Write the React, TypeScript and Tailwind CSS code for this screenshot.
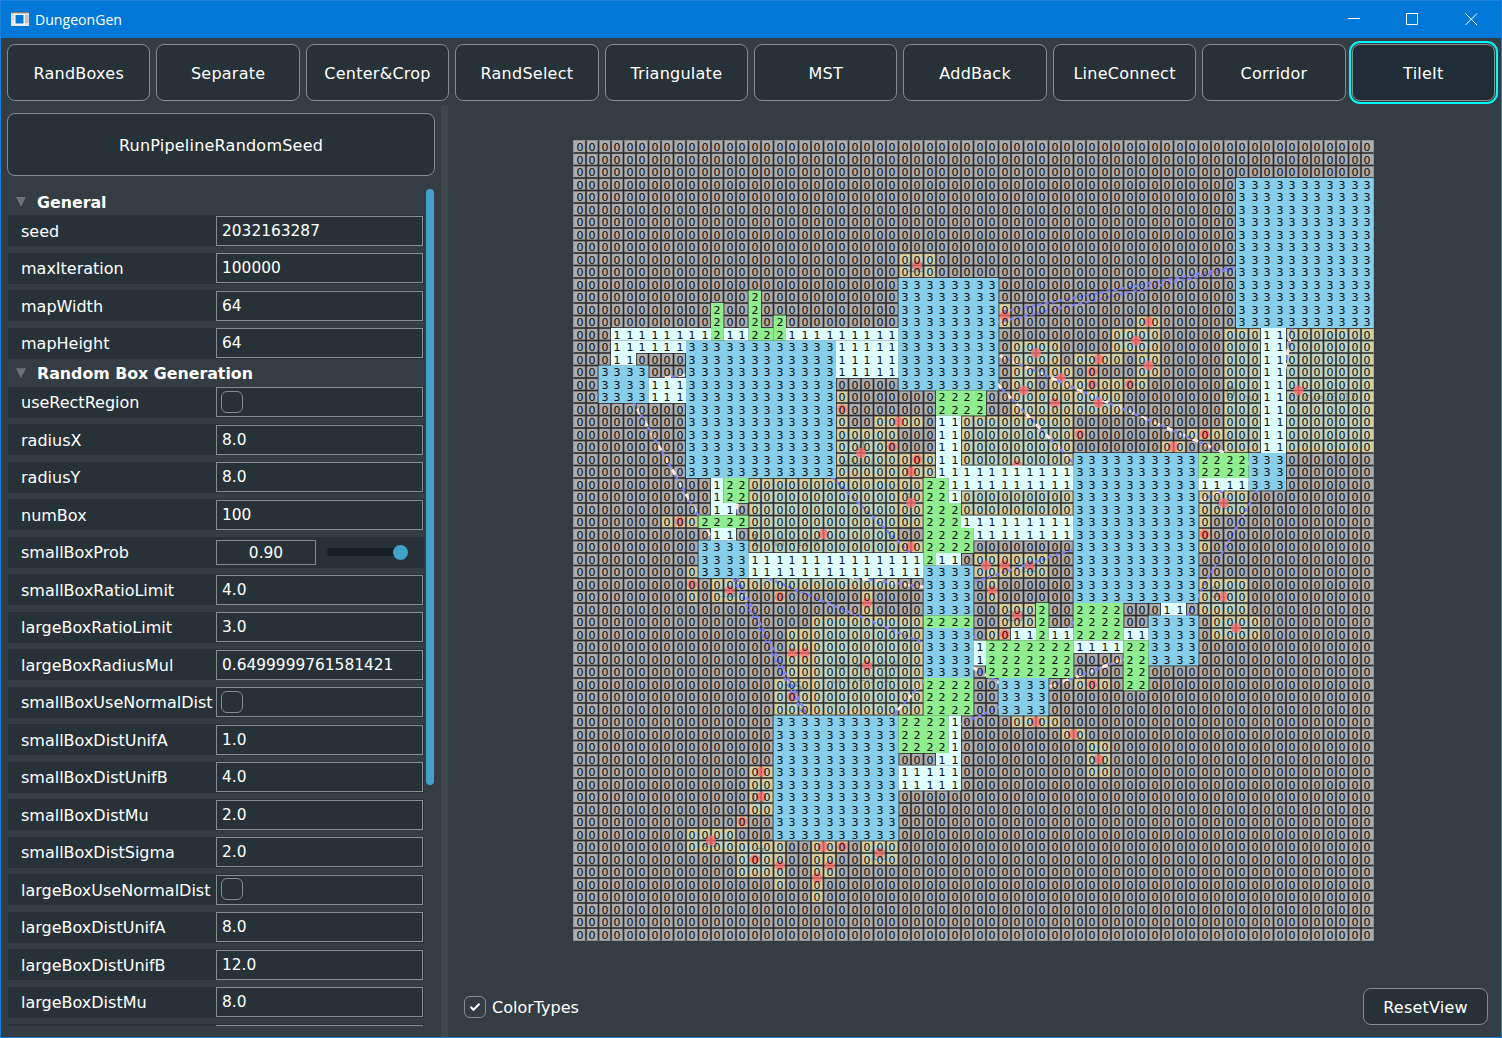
import React from 'react';
import clsx from 'clsx';

const N = 64;
const S = 12.5;

type Rect = [number, number, number, number];
type Tile = [number, number, number, number, number];

// Tile regions as column, row, width, height, type.
const TILES: Tile[] = [
  [53, 3, 11, 12, 3], [26, 11, 8, 9, 3], [9, 16, 12, 11, 3], [2, 18, 4, 3, 3], [40, 25, 10, 12, 3],
  [54, 25, 3, 3, 3], [10, 32, 4, 3, 3], [28, 34, 4, 4, 3], [28, 39, 4, 4, 3], [16, 46, 10, 10, 3],
  [34, 43, 4, 3, 3], [46, 38, 4, 4, 3],
  [14, 12, 1, 4, 2], [11, 13, 1, 3, 2], [16, 14, 1, 2, 2], [15, 15, 1, 1, 2],
  [3, 15, 8, 1, 1], [12, 15, 2, 1, 1], [17, 15, 9, 1, 1], [3, 16, 6, 1, 1], [3, 17, 2, 1, 1],
  [21, 16, 5, 3, 1], [6, 19, 3, 2, 1],
  [29, 20, 4, 2, 2], [29, 22, 2, 5, 1], [31, 26, 9, 1, 1], [28, 27, 2, 2, 2], [30, 27, 10, 1, 1],
  [30, 28, 1, 1, 1], [28, 29, 3, 2, 2], [31, 30, 9, 1, 1], [28, 31, 4, 2, 2], [32, 31, 8, 1, 1],
  [14, 33, 14, 2, 1], [28, 33, 1, 1, 2], [29, 33, 2, 1, 1],
  [11, 27, 1, 2, 1], [12, 27, 2, 2, 2], [11, 29, 2, 1, 1], [10, 30, 4, 1, 2], [11, 31, 2, 1, 1],
  [28, 38, 4, 1, 2], [37, 37, 1, 3, 2], [35, 39, 2, 1, 1], [38, 39, 2, 1, 1], [40, 37, 4, 3, 2],
  [44, 39, 2, 1, 1], [32, 40, 1, 2, 1], [33, 40, 7, 3, 2], [40, 40, 4, 1, 1], [44, 40, 2, 4, 2],
  [47, 37, 2, 1, 1], [50, 25, 4, 2, 2], [50, 27, 4, 1, 1], [55, 15, 2, 10, 1],
  [28, 43, 4, 3, 2], [26, 46, 4, 3, 2], [30, 46, 1, 3, 1], [29, 49, 2, 1, 1], [26, 50, 5, 2, 1],
];

const FILL = ['', '#e0ffff', '#90ee90', '#87ceeb'];

// Generated boxes that were not selected as rooms.
const BOXES: Rect[] = [
  [52, 15, 12, 10], [14, 27, 12, 9], [31, 22, 9, 8], [19, 38, 9, 8], [21, 23, 4, 4], [16, 43, 3, 3],
  [26, 9, 3, 2], [34, 13, 1, 2], [35, 16, 4, 2], [35, 18, 2, 4], [38, 18, 2, 2], [37, 20, 3, 2],
  [40, 17, 4, 1], [41, 18, 1, 1], [40, 19, 3, 1], [43, 19, 3, 1], [40, 20, 4, 2], [45, 14, 2, 1],
  [43, 15, 4, 2], [45, 17, 2, 2], [40, 23, 1, 1], [21, 20, 1, 3], [24, 22, 4, 1], [25, 23, 1, 3],
  [26, 25, 3, 1], [25, 26, 4, 1], [26, 27, 2, 4], [26, 32, 2, 1], [32, 33, 2, 2], [34, 33, 1, 2],
  [35, 33, 3, 2], [33, 35, 1, 2], [34, 37, 3, 2], [33, 39, 3, 1], [23, 36, 1, 2], [17, 39, 1, 4],
  [18, 39, 1, 4], [9, 34, 1, 3], [7, 30, 3, 1], [11, 35, 3, 2], [16, 36, 1, 1], [50, 28, 4, 2],
  [50, 30, 1, 3], [50, 35, 4, 3], [51, 38, 4, 2], [49, 23, 3, 1], [47, 24, 2, 1], [40, 43, 3, 1],
  [39, 47, 2, 1], [41, 48, 2, 3], [35, 46, 4, 1], [14, 50, 2, 1], [14, 51, 2, 3], [13, 54, 1, 1],
  [9, 55, 4, 2], [13, 56, 3, 3], [16, 56, 1, 4], [19, 56, 2, 1], [19, 57, 1, 4], [20, 57, 1, 2],
  [21, 56, 1, 1], [23, 56, 3, 2],
];

// Room graph edges as x1, y1, x2, y2, mst flag (1 = part of the spanning tree).
const EDGES: [number, number, number, number, number][] = [
  [375, 193, 731, 112, 0], [430, 171, 668, 125, 0], [50, 244, 150, 419, 1], [50, 244, 375, 193, 1],
  [375, 193, 694, 331, 1], [375, 193, 563, 388, 1], [188, 268, 375, 450, 0], [150, 419, 375, 513, 0],
  [150, 419, 263, 638, 0], [154, 419, 266, 638, 0], [150, 419, 375, 450, 1], [375, 450, 563, 388, 0],
  [375, 513, 263, 638, 1], [263, 638, 450, 556, 0], [375, 513, 450, 556, 1], [450, 556, 600, 500, 1],
  [375, 513, 404, 494, 0], [494, 490, 563, 388, 0], [694, 331, 600, 500, 0], [563, 388, 694, 331, 1],
  [731, 112, 694, 331, 1], [188, 268, 150, 419, 1],
];

// Faint box annotations as x, y, size, text.
const NOTES: [number, number, number, string][] = [
  [652, 257, 16, '0'], [672, 260, 10, 'w,h'], [716, 260, 10, 'cx,cy=26,-12'],
  [177, 405, 16, '1'], [197, 405, 10, 'w,h=12,9'],
  [263, 528, 16, '3'], [282, 528, 10, 'w,h=9,8'], [258, 542, 10, 'cx,cy=-9,10'],
  [283, 312, 16, '4'], [268, 324, 8, 'w,h=4,4'], [220, 552, 15, '5'],
  [182, 719, 15, '7'], [636, 457, 15, '6'],
  [334, 131, 14, '22'], [433, 480, 14, '20'], [128, 706, 13, '26'], [296, 719, 14, '16'],
  [447, 431, 13, '21'], [146, 456, 13, '13'], [640, 368, 13, '12'], [176, 661, 13, '19'],
  [331, 357, 13, '9'], [517, 625, 12, '24'],
];

const CELLS: number[][] = Array.from({ length: N }, () => Array<number>(N).fill(0));
TILES.forEach(([c, r, w, h, t]) => {
  for (let y = r; y < r + h; y++) for (let x = c; x < c + w; x++) CELLS[y][x] = t;
});
const GLYPH_X = Array.from({ length: N }, (_, i) => Math.round(i * S + S / 2 - 3.4)).join(' ');
const LINES = Array.from({ length: N - 1 }, (_, i) => (i + 1) * S);
const GRID_PATH = LINES.map((p) => `M${p} 0V800M0 ${p}H800`).join('');

function TileMap() {
  return (
    <svg className="block shrink-0" width="801" height="801" viewBox="-0.5 -0.5 801 801">
      <rect x="-0.5" y="-0.5" width="801" height="801" fill="#777777" />
      <rect width="800" height="800" fill="#adadaf" />
      {BOXES.map(([c, r, w, h], i) => (
        <g key={i}>
          <rect x={c * S} y={r * S} width={w * S} height={h * S} fill="#d9cea0" />
          <rect
            x={c * S + 4.5}
            y={r * S + 4.5}
            width={Math.max(w * S - 9, 2)}
            height={Math.max(h * S - 9, 2)}
            fill="#bfd4c2"
          />
        </g>
      ))}
      <g opacity="0.4" fill="#444">
        {NOTES.map(([x, y, size, text], i) => (
          <text key={i} x={x} y={y} fontSize={size}>{text}</text>
        ))}
      </g>
      <path d={GRID_PATH} stroke="#5d5d60" strokeOpacity="0.3" strokeWidth="2.6" />
      <path d={GRID_PATH} stroke="#1f1f21" strokeOpacity="0.9" strokeWidth="1.5" />
      {BOXES.map(([c, r, w, h], i) => (
        <circle key={i} cx={(c + w / 2) * S} cy={(r + h / 2) * S} r="5" fill="#ff6b6b" opacity="0.75" />
      ))}
      {EDGES.map(([x1, y1, x2, y2, mst], i) => (
        <g key={i} strokeWidth="2.4">
          <path d={`M${x1} ${y1}L${x2} ${y2}`} stroke="#8080f8" strokeOpacity="0.95" strokeDasharray="4 3" />
          {mst === 1 && <path d={`M${x1} ${y1}L${x2} ${y2}`} stroke="#ffe8dc" strokeWidth="3" strokeDasharray="6 8" />}
        </g>
      ))}
      {TILES.map(([c, r, w, h, t], i) => (
        <rect key={i} x={c * S} y={r * S} width={w * S} height={h * S} fill={FILL[t]} />
      ))}
      <g fontSize="11" fill="#000" opacity="0.94">
        {CELLS.map((row, y) => (
          <text key={y} x={GLYPH_X} y={Math.round(y * S + 10.2) + 0.5}>{row.join('')}</text>
        ))}
      </g>
    </svg>
  );
}

const STEPS = [
  'RandBoxes', 'Separate', 'Center&Crop', 'RandSelect', 'Triangulate',
  'MST', 'AddBack', 'LineConnect', 'Corridor', 'TileIt',
];

type Field = { name: string; value?: string; kind?: 'check' | 'slider' };

const GENERAL: Field[] = [
  { name: 'seed', value: '2032163287' },
  { name: 'maxIteration', value: '100000' },
  { name: 'mapWidth', value: '64' },
  { name: 'mapHeight', value: '64' },
];

const BOXGEN: Field[] = [
  { name: 'useRectRegion', kind: 'check' },
  { name: 'radiusX', value: '8.0' },
  { name: 'radiusY', value: '8.0' },
  { name: 'numBox', value: '100' },
  { name: 'smallBoxProb', value: '0.90', kind: 'slider' },
  { name: 'smallBoxRatioLimit', value: '4.0' },
  { name: 'largeBoxRatioLimit', value: '3.0' },
  { name: 'largeBoxRadiusMul', value: '0.6499999761581421' },
  { name: 'smallBoxUseNormalDist', kind: 'check' },
  { name: 'smallBoxDistUnifA', value: '1.0' },
  { name: 'smallBoxDistUnifB', value: '4.0' },
  { name: 'smallBoxDistMu', value: '2.0' },
  { name: 'smallBoxDistSigma', value: '2.0' },
  { name: 'largeBoxUseNormalDist', kind: 'check' },
  { name: 'largeBoxDistUnifA', value: '8.0' },
  { name: 'largeBoxDistUnifB', value: '12.0' },
  { name: 'largeBoxDistMu', value: '8.0' },
  { name: '', value: '' },
];

function Row({ field }: { field: Field }) {
  return (
    <div className="mb-[6.5px] flex h-[31px] shrink-0 bg-[#273238]">
      <div className="flex w-[208px] shrink-0 items-center whitespace-nowrap pl-[13px] pt-[2px] text-[16px]">{field.name}</div>
      {field.kind === 'slider' ? (
        <div className="flex flex-1 items-center">
          <div className="flex h-[25px] w-[100px] items-center justify-center border border-[#858d91] pt-[3px]">{field.value}</div>
          <div className="ml-[11px] flex h-2 w-[81px] items-center justify-end rounded-full bg-[#192024]">
            <div className="size-[15px] shrink-0 rounded-full bg-[#43a2ca]" />
          </div>
        </div>
      ) : (
        <div className="mr-px mt-[0.5px] flex h-[30px] flex-1 items-center border border-[#858d91] pl-[5px] pt-[2px]">
          {field.kind === 'check' ? (
            <div className="-ml-px mb-[3px] size-[22px] rounded-md border border-[#858d91]" />
          ) : (
            field.value
          )}
        </div>
      )}
    </div>
  );
}

function Section({ title, fields, first }: { title: string; fields: Field[]; first?: boolean }) {
  return (
    <>
      <div className={clsx('flex shrink-0 items-center pl-2 text-[15.8px] font-bold', first ? 'h-[26px]' : 'h-[21.5px] pb-[5px]')}>
        <div className="h-[10px] w-[10px] bg-[#6d7375] [clip-path:polygon(0_0,100%_0,50%_100%)]" />
        <span className={clsx('ml-[11px]', first ? 'pt-[2px]' : 'pt-px')}>{title}</span>
      </div>
      {fields.map((f, i) => (
        <Row key={i} field={f} />
      ))}
    </>
  );
}

export default function App() {
  return (
    <div className="flex h-[1038px] w-[1502px] flex-col overflow-hidden border-x border-b border-[#1a80d9] bg-[#333d43] font-['DejaVu_Sans',sans-serif] text-[15.4px] leading-none text-white">
      <header className="flex h-[38px] shrink-0 items-center border-t border-[#1a84dc] bg-[#0078d7] pl-[10px]">
        <svg className="mb-[2px]" width="18" height="14" viewBox="0 0 18 14">
          <rect width="18" height="14" fill="#e8e8e8" />
          <rect width="18" height="1.3" fill="#8a8178" />
          <rect x="4" y="2.500" width="9" height="9.500" fill="#0078d7" stroke="#fff" />
          <path d="M1 4h2M1 7h2M14.500 3.500h2.500v7h-2.500z" stroke="#b9b9b9" fill="#c8c8c8" />
        </svg>
        <span className="ml-[6px] pt-px font-['Open_Sans',sans-serif] text-[14.1px]">DungeonGen</span>
        <svg className="mb-[2px] ml-auto mr-[22px]" width="132" height="14" viewBox="0 0 132 14" fill="none" stroke="#fff">
          <path d="M1 6.500h12M59.500 1.500h11v11h-11zM118.500 1.500l11.500 11.500M130 1.500l-11.500 11.500" />
        </svg>
      </header>
      <nav className="flex h-[68px] shrink-0 gap-[6px] px-[6px] pt-[6px] text-[16px] tracking-[0.25px]">
        {STEPS.map((s) => (
          <button
            key={s}
            className={clsx(
              'flex h-[57px] flex-1 basis-0 items-center justify-center rounded-lg border border-[#858d91] pt-[2px]',
              s === 'TileIt' ? 'bg-[#202d37] outline-2 outline-offset-[1.5px] outline-[#00f8fa]' : 'bg-[#273238]',
            )}
          >
            {s}
          </button>
        ))}
      </nav>
      <main className="flex min-h-0 flex-1">
        <aside className="flex w-[440px] shrink-0 flex-col px-[6px] pt-[7px]">
          <button className="h-[63px] w-[428px] shrink-0 rounded-lg border border-[#858d91] bg-[#273238] pt-[2px] text-[16px] tracking-[0.22px]">
            RunPipelineRandomSeed
          </button>
          <div className="mt-[13px] flex h-[837px] shrink-0">
            <div className="ml-px flex w-[416px] flex-col overflow-hidden">
              <Section title="General" fields={GENERAL} first />
              <Section title="Random Box Generation" fields={BOXGEN} />
            </div>
            <div className="ml-[2px] h-[596px] w-2 rounded-full bg-[#43a2ca]" />
          </div>
        </aside>
        <div className="w-[7px] shrink-0 bg-[#3f474e]" />
        <section className="flex min-w-0 flex-1 flex-col">
          <div className="flex h-[869px] shrink-0 pl-[125px] pt-[34px]">
            <TileMap />
          </div>
          <div className="flex items-center pl-4 pr-[13px] pt-[13px] text-[16px]">
            <div className="flex size-[22px] items-center justify-center rounded-md border border-[#858d91]">
              <svg width="12" height="10" viewBox="0 0 12 10" fill="none" stroke="#fff" strokeWidth="2">
                <path d="M1.500 4.800l3 3L10.500 1.800" />
              </svg>
            </div>
            <span className="ml-[6px] pt-[2px]">ColorTypes</span>
            <button className="ml-auto h-[37px] w-[125px] rounded-lg border border-[#858d91] bg-[#273238] pt-[2px] tracking-[0.2px]">
              ResetView
            </button>
          </div>
        </section>
      </main>
    </div>
  );
}
